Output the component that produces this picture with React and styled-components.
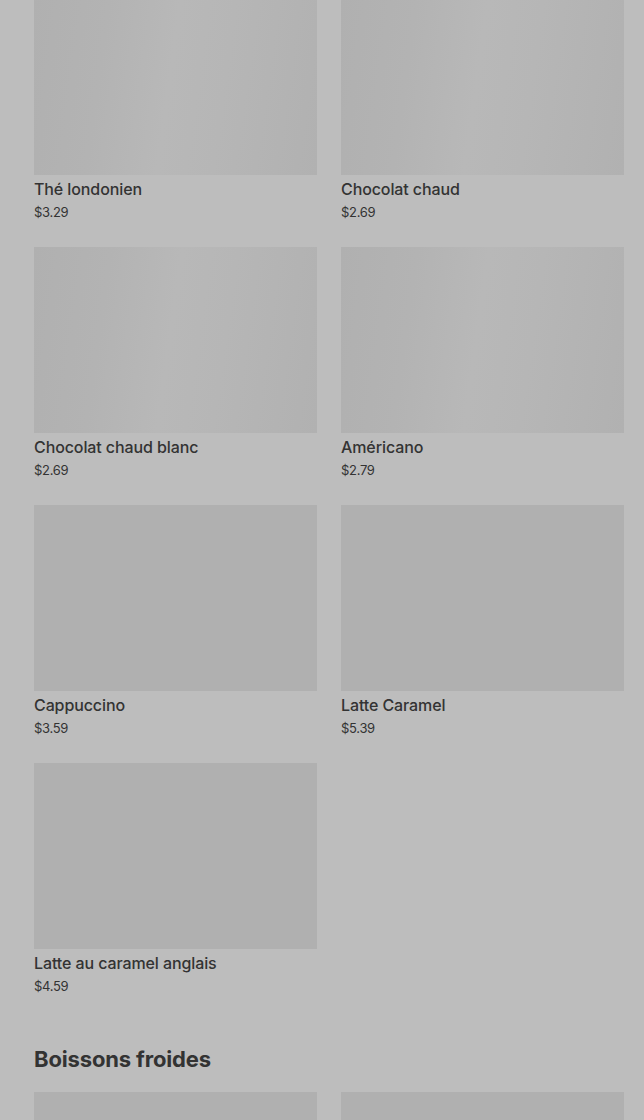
import React from "react";
import styled, { createGlobalStyle } from "styled-components";

const Global = createGlobalStyle`
  html, body { margin: 0; padding: 0; background: #bdbdbd; }
  body { font-family: Inter, "Noto Sans", sans-serif; color: #333; overflow: hidden; }
`;

const Page = styled.main`
  padding: 0 20px 0 34px;
  margin-top: -11px;
`;

const Section = styled.section`
  margin-bottom: 48px;
`;

const Heading = styled.h2`
  margin: 0 0 18px;
  font-size: 22px;
  line-height: 30px;
  font-weight: 700;
  letter-spacing: -0.15px;
  color: #333;
`;

const Grid = styled.div`
  display: grid;
  grid-template-columns: 1fr 1fr;
  column-gap: 24px;
  row-gap: 25px;
`;

const Card = styled.div`
  display: flex;
  flex-direction: column;
`;

const Thumb = styled.div`
  height: 186px;
  background: ${(p) =>
    p.$shimmer
      ? "linear-gradient(98deg, #b0b0b0 0%, #b3b3b3 25%, #b8b8b8 48%, #b6b6b6 66%, #b1b1b1 100%)"
      : "#b0b0b0"};
`;

const Name = styled.div`
  margin-top: 2px;
  font-size: 16px;
  line-height: 24px;
  font-weight: 500;
  color: #333;
  letter-spacing: -0.1px;
`;

const Price = styled.div`
  margin-top: 1px;
  font-size: 13px;
  line-height: 20px;
  color: #333;
  letter-spacing: -0.3px;
`;

const hot = [
  { name: "Thé londonien", price: "$3.29", shimmer: true },
  { name: "Chocolat chaud", price: "$2.69", shimmer: true },
  { name: "Chocolat chaud blanc", price: "$2.69", shimmer: true },
  { name: "Américano", price: "$2.79", shimmer: true },
  { name: "Cappuccino", price: "$3.59" },
  { name: "Latte Caramel", price: "$5.39" },
  { name: "Latte au caramel anglais", price: "$4.59" },
];

const cold = [
  { name: "Café glacé", price: "$3.19" },
  { name: "Latte glacé", price: "$4.29" },
];

function Item({ item }) {
  return (
    <Card>
      <Thumb $shimmer={item.shimmer} />
      <Name>{item.name}</Name>
      <Price>{item.price}</Price>
    </Card>
  );
}

export default function App() {
  return (
    <>
      <Global />
      <Page>
        <Section>
          <Grid>
            {hot.map((it) => (
              <Item key={it.name} item={it} />
            ))}
          </Grid>
        </Section>
        <Section>
          <Heading>Boissons froides</Heading>
          <Grid>
            {cold.map((it) => (
              <Item key={it.name} item={it} />
            ))}
          </Grid>
        </Section>
      </Page>
    </>
  );
}
